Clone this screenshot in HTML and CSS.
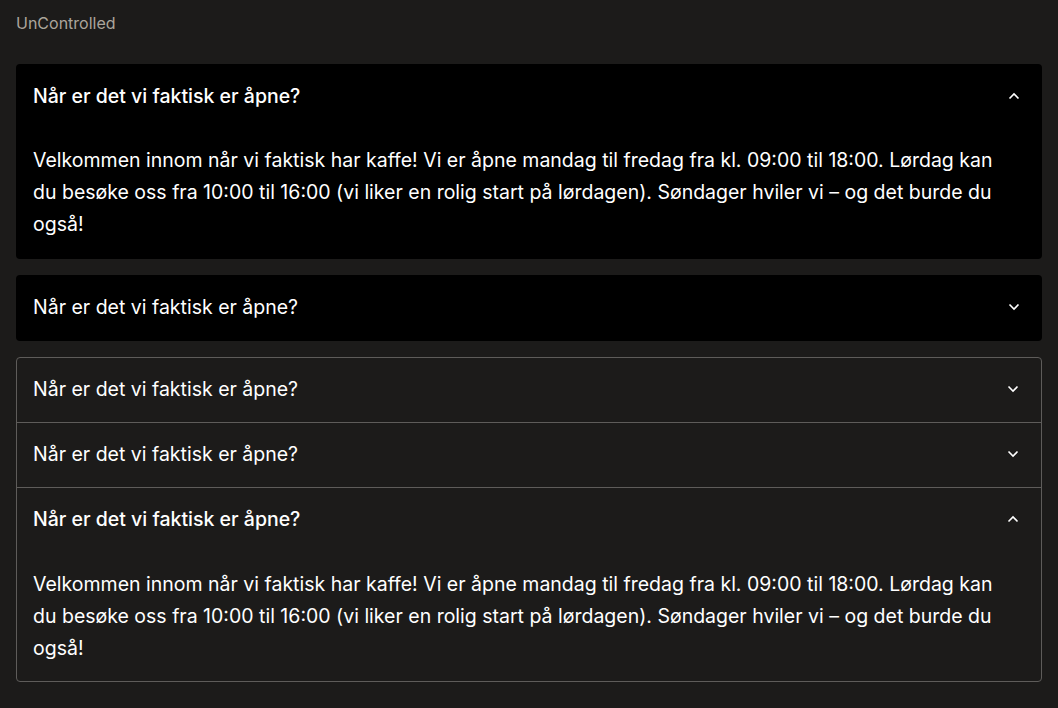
FILE: index.html
```html
<!DOCTYPE html>
<html lang="no">
<head>
<meta charset="utf-8">
<link rel="stylesheet" href="styles.css">
</head>
<body>
<div class="page">
  <div class="label">UnControlled</div>

  <div class="card open">
    <div class="head">
      <span class="title strong">Når er det vi faktisk er åpne?</span>
      <svg class="chev" width="12" height="8" viewBox="0 0 12 8"><path d="M1.5 6.5 L6 2 L10.5 6.5" fill="none" stroke="#fff" stroke-width="1.6"/></svg>
    </div>
    <div class="body">Velkommen innom når vi faktisk har kaffe! Vi er åpne mandag til fredag fra kl. 09:00 til 18:00. Lørdag kan du besøke oss fra 10:00 til 16:00 (vi liker en rolig start på lørdagen). Søndager hviler vi – og det burde du også!</div>
  </div>

  <div class="card">
    <div class="head">
      <span class="title">Når er det vi faktisk er åpne?</span>
      <svg class="chev" width="12" height="8" viewBox="0 0 12 8"><path d="M1.5 1.5 L6 6 L10.5 1.5" fill="none" stroke="#fff" stroke-width="1.6"/></svg>
    </div>
  </div>

  <div class="group">
    <div class="item">
      <div class="head">
        <span class="title">Når er det vi faktisk er åpne?</span>
        <svg class="chev" width="12" height="8" viewBox="0 0 12 8"><path d="M1.5 1.5 L6 6 L10.5 1.5" fill="none" stroke="#fff" stroke-width="1.6"/></svg>
      </div>
    </div>
    <div class="item">
      <div class="head">
        <span class="title">Når er det vi faktisk er åpne?</span>
        <svg class="chev" width="12" height="8" viewBox="0 0 12 8"><path d="M1.5 1.5 L6 6 L10.5 1.5" fill="none" stroke="#fff" stroke-width="1.6"/></svg>
      </div>
    </div>
    <div class="item">
      <div class="head">
        <span class="title strong">Når er det vi faktisk er åpne?</span>
        <svg class="chev" width="12" height="8" viewBox="0 0 12 8"><path d="M1.5 6.5 L6 2 L10.5 6.5" fill="none" stroke="#fff" stroke-width="1.6"/></svg>
      </div>
      <div class="body">Velkommen innom når vi faktisk har kaffe! Vi er åpne mandag til fredag fra kl. 09:00 til 18:00. Lørdag kan du besøke oss fra 10:00 til 16:00 (vi liker en rolig start på lørdagen). Søndager hviler vi – og det burde du også!</div>
    </div>
  </div>
</div>
</body>
</html>
```

FILE: styles.css
```css
html, body {
  margin: 0;
  padding: 0;
  background: #1c1b1a;
}
body {
  font-family: Inter, "Liberation Sans", sans-serif;
  color: #fff;
}
.page {
  padding: 12px 16px 16px;
  display: flex;
  flex-direction: column;
  gap: 16px;
}
.label {
  font-size: 16px;
  line-height: 22px;
  color: #aba59c;
  margin-bottom: 14px;
}
.card {
  background: #000;
  border-radius: 4px;
}
.head {
  height: 64px;
  padding: 0 22px 2px 17px;
  display: flex;
  align-items: center;
  justify-content: space-between;
  box-sizing: border-box;
}
.card .head {
  height: 66px;
  padding-bottom: 2px;
}
.title {
  font-size: 19.5px;
  font-weight: 400;
}
.title.strong {
  font-weight: 500;
}
.chev {
  display: block;
}
.body {
  padding: 14px 24px 19px 17px;
  font-size: 19.5px;
  line-height: 32px;
}
.group {
  border: 1px solid #5e5c5a;
  border-radius: 4px;
}
.item + .item {
  border-top: 1px solid #5e5c5a;
}
.group .head {
  padding-left: 16px;
}
.group .body {
  padding: 16px 24px 17px 16px;
}
```
